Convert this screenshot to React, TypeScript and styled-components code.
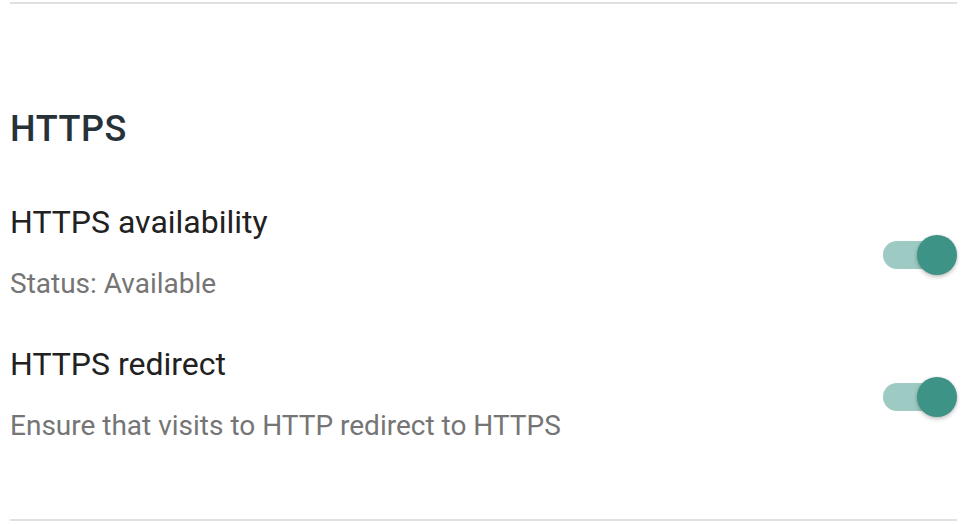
import React, { FunctionComponent } from "react";
import styled, { createGlobalStyle } from "styled-components";

const GlobalStyle = createGlobalStyle`
    html, body {
        margin: 0;
        padding: 0;
        background: #ffffff;
    }
    body {
        font-family: Roboto, "Noto Sans", "Liberation Sans", sans-serif;
        -webkit-font-smoothing: antialiased;
    }
`

interface SettingProps {
    title: string;
    summary: string;
    checked: boolean;
}

const SettingRow: FunctionComponent<SettingProps> = ({ title, summary, checked }) => {
    return (
        <Row>
            <Texts>
                <Title>{title}</Title>
                <Summary>{summary}</Summary>
            </Texts>
            <Switch role="switch" aria-checked={checked}>
                <Track $on={checked} />
                <Thumb $on={checked} />
            </Switch>
        </Row>
    );
}

const App: FunctionComponent = () => {
    return (
        <>
            <GlobalStyle />
            <Page>
                <Divider />
                <Category>HTTPS</Category>
                <SettingRow
                    title="HTTPS availability"
                    summary="Status: Available"
                    checked={true}
                />
                <SettingRow
                    title="HTTPS redirect"
                    summary="Ensure that visits to HTTP redirect to HTTPS"
                    checked={true}
                />
                <BottomDivider />
            </Page>
        </>
    );
}

export default App;


const Page = styled.div`
    width: 974px;
    height: 524px;
    box-sizing: border-box;
    padding: 2px 17px 0 10px;
    display: flex;
    flex-direction: column;
    overflow: hidden;
`

const Divider = styled.div`
    height: 2px;
    background-color: #e0e0e0;
`

const BottomDivider = styled(Divider)`
    margin-top: auto;
    margin-bottom: 3px;
`

const Category = styled.h2`
    margin: 103px 0 0 0;
    font-size: 36px;
    line-height: 44px;
    font-weight: 500;
    letter-spacing: 0.6px;
    color: #263238;
`

const Row = styled.div`
    display: flex;
    align-items: center;
    justify-content: space-between;
    margin-top: 51px;

    & + & {
        margin-top: 42px;
    }
`

const Texts = styled.div`
    display: flex;
    flex-direction: column;
    gap: 24px;
`

const Title = styled.div`
    font-size: 32px;
    line-height: 40px;
    color: #212121;
`

const Summary = styled.div`
    font-size: 28px;
    line-height: 36px;
    color: #757575;
`

const Switch = styled.div`
    position: relative;
    width: 74px;
    height: 40px;
    flex-shrink: 0;
    margin-top: 6px;
`

const Track = styled.div<{ $on: boolean }>`
    position: absolute;
    left: 0;
    top: 6px;
    width: 68px;
    height: 28px;
    border-radius: 14px;
    background-color: ${p => (p.$on ? "#9dcac2" : "#bdbdbd")};
`

const Thumb = styled.div<{ $on: boolean }>`
    position: absolute;
    top: 0;
    ${p => (p.$on ? "right: 0;" : "left: 0;")}
    width: 40px;
    height: 40px;
    border-radius: 50%;
    background-color: ${p => (p.$on ? "#3d9486" : "#fafafa")};
    box-shadow: 0 2px 4px rgba(0, 0, 0, 0.24), 0 0 2px rgba(0, 0, 0, 0.12);
`
